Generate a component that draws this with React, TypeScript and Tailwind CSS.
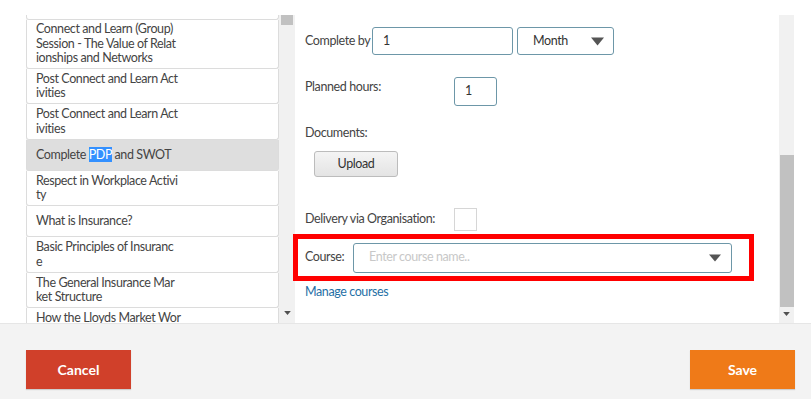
import React from "react";

const items: { lines: string[]; h: number; selected?: boolean }[] = [
  { lines: ["Connect and Learn (Group)", "Session - The Value of Relat", "ionships and Networks"], h: 49 },
  { lines: ["Post Connect and Learn Act", "ivities"], h: 35 },
  { lines: ["Post Connect and Learn Act", "ivities"], h: 36 },
  { lines: ["__PDP__"], h: 31, selected: true },
  { lines: ["Respect in Workplace Activi", "ty"], h: 35 },
  { lines: ["What is Insurance?"], h: 31 },
  { lines: ["Basic Principles of Insuranc", "e"], h: 36 },
  { lines: ["The General Insurance Mar", "ket Structure"], h: 35 },
  { lines: ["How the Lloyds Market Wor", "ks"], h: 35 },
];

function Arrow({ cls }: { cls: string }) {
  return (
    <svg className={cls} viewBox="0 0 10 6" width="10" height="6">
      <path d="M0 0 L10 0 L5 6 Z" fill="currentColor" />
    </svg>
  );
}

export default function App() {
  return (
    <div
      className="w-[811px] h-[399px] flex flex-col bg-white text-[#444] text-[12.5px] tracking-[-0.4px] overflow-hidden"
      style={{ fontFamily: 'Lato, "Noto Sans", sans-serif' }}
    >
      <div className="h-[323px] flex pt-[15px] bg-white">
        {/* left list */}
        <div className="ml-[26px] w-[253px] h-[308px] overflow-hidden flex flex-col">
          <div className="h-[5px] shrink-0 border-x border-b border-[#dcdcdc] rounded-b-[3px] shadow-[0_1px_1px_rgba(0,0,0,0.06)]" />
          {items.map((it, i) => (
            <div
              key={i}
              style={{ height: it.h }}
              className={`shrink-0 flex items-center pl-[9px] border-x border-b border-[#dcdcdc] rounded-b-[3px] shadow-[0_1px_1px_rgba(0,0,0,0.06)] leading-[14.5px] text-[#444] ${
                it.selected ? "bg-[#dedede]" : "bg-white"
              }`}
            >
              <div className={it.selected ? "" : ""}>
                {it.lines[0] === "__PDP__" ? (
                  <div className="whitespace-nowrap">
                    Complete <span className="bg-[#3390ff] text-white">PDP</span> and SWOT
                  </div>
                ) : (
                  it.lines.map((l, j) => (
                    <div key={j} className="whitespace-nowrap">
                      {l}
                    </div>
                  ))
                )}
              </div>
            </div>
          ))}
        </div>
        {/* left scrollbar */}
        <div className="w-[16px] h-[308px] bg-[#f1f1f1] flex flex-col items-center justify-between">
          <div className="w-[12px] h-[10px] bg-[#c1c1c1] mt-0" />
          <Arrow cls="w-[7px] h-[4px] text-[#505050] mb-[8px]" />
        </div>

        {/* right content */}
        <div className="flex-1 pl-[10px] flex flex-col">
          <div className="flex items-center mt-[12px] h-[28px]">
            <span className="w-[67px] whitespace-nowrap">Complete by</span>
            <div className="w-[141px] h-[28px] border border-[#6d97a8] rounded-[3px] flex items-center pl-[10px] text-[#333]">1</div>
            <div className="ml-[4px] w-[97px] h-[28px] border border-[#6d97a8] rounded-[3px] flex items-center justify-between pl-[15px] pr-[9px] text-[#333]">
              <span>Month</span>
              <Arrow cls="w-[13px] h-[9px] text-[#555]" />
            </div>
          </div>
          <div className="flex items-start mt-[22px]">
            <span className="w-[149px] mt-[1px] whitespace-nowrap">Planned hours:</span>
            <div className="w-[43px] h-[29px] border border-[#6d97a8] rounded-[3px] flex items-center pl-[10px] text-[#333]">1</div>
          </div>
          <div className="mt-[19px] leading-[16px]">Documents:</div>
          <div className="mt-[10px] ml-[9px] w-[84px] h-[26px] rounded-[3px] border border-[#bcbcbc] bg-gradient-to-b from-[#f4f4f4] to-[#e4e4e4] flex items-center justify-center text-[#333]">
            Upload
          </div>
          <div className="flex items-center mt-[31px] h-[23px]">
            <span className="w-[149px] whitespace-nowrap">Delivery via Organisation:</span>
            <div className="w-[23px] h-[23px] border border-[#d6d6d6] bg-white" />
          </div>
          <div className="mt-[3px] -ml-[12px] w-[461px] h-[47px] border-[5px] border-[#ff0000] flex items-center pl-[7px]">
            <span className="w-[48px]">Course:</span>
            <div className="w-[379px] h-[30px] border border-[#6d97a8] rounded-[3px] flex items-center justify-between pl-[15px] pr-[10px] text-[#c8c8c8]">
              <span>Enter course name..</span>
              <Arrow cls="w-[12px] h-[8px] text-[#555]" />
            </div>
          </div>
          <div className="mt-[2px] text-[#1f6fa5]">Manage courses</div>
        </div>

        {/* right scrollbar */}
        <div className="mr-[17px] w-[15px] h-[308px] bg-[#f1f1f1] flex flex-col items-center">
          <div className="mt-[140px] w-[14px] h-[152px] bg-[#c1c1c1]" />
          <Arrow cls="mt-[5px] w-[7px] h-[4px] text-[#505050]" />
        </div>
      </div>

      {/* footer */}
      <div className="flex-1 bg-[#f3f3f3] border-t border-[#e6e6e6] flex items-start justify-between pl-[26px] pr-[16px] pt-[26px]">
        <div className="w-[105px] h-[39px] bg-[#d0402a] text-white text-[14px] font-bold tracking-normal flex items-center justify-center shadow-[0_1px_1px_rgba(0,0,0,0.15)]">
          Cancel
        </div>
        <div className="w-[105px] h-[39px] bg-[#ef7a18] text-white text-[14px] font-bold tracking-normal flex items-center justify-center shadow-[0_1px_1px_rgba(0,0,0,0.15)]">
          Save
        </div>
      </div>
    </div>
  );
}
